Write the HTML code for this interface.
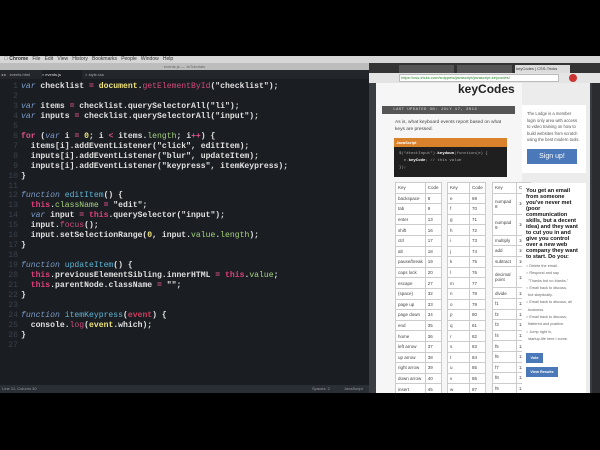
<!DOCTYPE html>
<html><head><style>
*{margin:0;padding:0;box-sizing:border-box}
body{width:600px;height:450px;background:#000;position:relative;overflow:hidden;font-family:"Liberation Sans",sans-serif}
.a{position:absolute}
#menu{left:0;top:56px;width:600px;height:7px;background:#d6d6d6;font-size:5px;color:#333;line-height:7px;white-space:nowrap}
#title{left:0;top:63px;width:369px;height:7px;background:#bdbdbd;font-size:4px;color:#666;text-align:center;line-height:7px}
#tabs{left:0;top:70px;width:369px;height:9px;background:#23272c;font-size:4px;color:#aaa;line-height:9px}
#ed{left:0;top:79px;width:369px;height:306px;background:#1a1e23}
#code{left:5px;top:82px;font-family:"Liberation Mono",monospace;font-size:8.1px;line-height:9.96px;color:#e0e0e0;white-space:pre;font-weight:bold}
.n{color:#3a4048;display:inline-block;width:13px;text-align:right;margin-right:3px;font-weight:normal}
.k{color:#7b9ac7;font-style:italic;font-weight:normal}
.p{color:#e0508a}
.y{color:#f0e27a}
.m{color:#d34a7a;font-weight:normal}
.g{color:#a6d27c;font-weight:normal}
.t{color:#e0407a}
.f{color:#5fb3d3;font-weight:normal}
.r{color:#d03a5a}
#status{left:0;top:385px;width:369px;height:8px;background:#2a2f35;font-size:4px;color:#999;line-height:8px}
#br{left:369px;top:63px;width:231px;height:330px;background:#3a3d41;overflow:hidden}
#btabs{left:0;top:0;width:231px;height:10px;background:#333}
#addr{left:0;top:10px;width:231px;height:10px;background:#e4e4e4}
#page{left:7px;top:20px;width:214px;height:310px;background:#ececec;overflow:hidden}
table{border-collapse:collapse;background:#fff;font-size:4.5px;color:#444}
td{border:1px solid #ccc;height:10.6px;padding:0 2px;white-space:nowrap}
</style></head><body>
<div id="menu" class="a">&nbsp;&nbsp;&nbsp;<b>&#63743; Chrome</b>&nbsp;&nbsp; File&nbsp;&nbsp; Edit&nbsp;&nbsp; View&nbsp;&nbsp; History&nbsp;&nbsp; Bookmarks&nbsp;&nbsp; People&nbsp;&nbsp; Window&nbsp;&nbsp; Help</div>
<div id="title" class="a">events.js — JsTutorials</div>
<div id="tabs" class="a">&nbsp;◂ ▸&nbsp;&nbsp; <span style="display:inline-block;width:30px">events.html</span>&nbsp;&nbsp;<span style="display:inline-block;width:40px;background:#1a1e23;color:#ddd">× events.js</span>&nbsp;&nbsp; × style.css</div>
<div id="ed" class="a"></div>
<div id="code" class="a"><span class="n">1</span><span class="k">var</span> checklist <span class="p">=</span> <span class="y">document</span>.<span class="m">getElementById</span>("checklist");
<span class="n">2</span>
<span class="n">3</span><span class="k">var</span> items <span class="p">=</span> checklist.querySelectorAll("li");
<span class="n">4</span><span class="k">var</span> inputs <span class="p">=</span> checklist.querySelectorAll("input");
<span class="n">5</span>
<span class="n">6</span><span class="p">for</span> (<span class="k">var</span> i <span class="p">=</span> <span class="y">0</span>; i <span class="p">&lt;</span> items.<span class="g">length</span>; i<span class="p">++</span>) {
<span class="n">7</span>  items[i].addEventListener("click", editItem);
<span class="n">8</span>  inputs[i].addEventListener("blur", updateItem);
<span class="n">9</span>  inputs[i].addEventListener("keypress", itemKeypress);
<span class="n">10</span>}
<span class="n">11</span>
<span class="n">12</span><span class="k">function</span> <span class="f">editItem</span>() {
<span class="n">13</span>  <span class="t">this</span>.<span class="g">className</span> <span class="p">=</span> "edit";
<span class="n">14</span>  <span class="k">var</span> input <span class="p">=</span> <span class="t">this</span>.querySelector("input");
<span class="n">15</span>  input.<span class="m">focus</span>();
<span class="n">16</span>  input.setSelectionRange(<span class="y">0</span>, input.<span class="g">value</span>.<span class="g">length</span>);
<span class="n">17</span>}
<span class="n">18</span>
<span class="n">19</span><span class="k">function</span> <span class="f">updateItem</span>() {
<span class="n">20</span>  <span class="t">this</span>.previousElementSibling.innerHTML <span class="p">=</span> <span class="t">this</span>.<span class="g">value</span>;
<span class="n">21</span>  <span class="t">this</span>.parentNode.className <span class="p">=</span> "";
<span class="n">22</span>}
<span class="n">23</span>
<span class="n">24</span><span class="k">function</span> <span class="f">itemKeypress</span>(<span class="r">event</span>) {
<span class="n">25</span>  console.<span class="m">log</span>(<span class="y">event</span>.which);
<span class="n">26</span>}
<span class="n">27</span></div>
<div id="status" class="a">&nbsp;&nbsp;Line 11, Column 30<span style="position:absolute;left:312px">Spaces: 2</span><span style="position:absolute;left:344px">JavaScript</span></div>
<div id="br" class="a">
 <div id="btabs" class="a"><div class="a" style="left:30px;top:2px;width:55px;height:8px;background:#555"></div><div class="a" style="left:88px;top:2px;width:55px;height:8px;background:#555"></div><div class="a" style="left:146px;top:2px;width:55px;height:8px;background:#ddd;font-size:4px;line-height:8px;color:#333">&nbsp;keyCodes | CSS-Tricks</div></div>
 <div id="addr" class="a"><div class="a" style="left:30px;top:1px;width:160px;height:8px;background:#fff;border:1px solid #bbb;font-size:4px;line-height:6px;color:#2a8a2a">&nbsp;https://css-tricks.com/snippets/javascript/javascript-keycodes/</div><div class="a" style="left:200px;top:1px;width:8px;height:8px;border-radius:4px;background:#c33"></div></div>
 <div id="page" class="a">
  <div class="a" style="left:0;top:0;width:146px;height:310px;background:#f6f6f6"></div>
  <div class="a" style="left:82px;top:0;font-size:12px;font-weight:bold;color:#222;line-height:13px">keyCodes</div>
  <div class="a" style="left:6px;top:23px;width:133px;height:8px;background:#555;color:#ddd;font-size:4px;line-height:8px;font-family:'Liberation Mono',monospace;letter-spacing:.4px">&nbsp;&nbsp;&nbsp;&nbsp;LAST UPDATED ON: JULY 17, 2014</div>
  <div class="a" style="left:19px;top:36px;width:115px;font-size:4.8px;line-height:7px;color:#444">As is, what keyboard events report based on what keys are pressed.</div>
  <div class="a" style="left:18px;top:55px;width:113px;height:9px;background:#d9822b;color:#fff;font-size:4px;line-height:9px;font-weight:bold">&nbsp;&nbsp;JavaScript</div>
  <div class="a" style="left:18px;top:64px;width:113px;height:30px;background:#1f1f1f;color:#aaa;font-size:4px;line-height:7px;font-family:'Liberation Mono',monospace;padding:4px 5px">$("#textInput").<b style="color:#fff">keydown</b>(function(e) {<br>&nbsp;&nbsp;e.<b style="color:#fff">keyCode</b>; // this value<br>});</div>
  <div class="a" style="left:19px;top:99px">
  <table><tr><td style="width:29px">Key</td><td style="width:14px">Code</td></tr>
  <tr><td>backspace</td><td>8</td></tr><tr><td>tab</td><td>9</td></tr><tr><td>enter</td><td>13</td></tr><tr><td>shift</td><td>16</td></tr><tr><td>ctrl</td><td>17</td></tr><tr><td>alt</td><td>18</td></tr><tr><td>pause/break</td><td>19</td></tr><tr><td>caps lock</td><td>20</td></tr><tr><td>escape</td><td>27</td></tr><tr><td>(space)</td><td>32</td></tr><tr><td>page up</td><td>33</td></tr><tr><td>page down</td><td>34</td></tr><tr><td>end</td><td>35</td></tr><tr><td>home</td><td>36</td></tr><tr><td>left arrow</td><td>37</td></tr><tr><td>up arrow</td><td>38</td></tr><tr><td>right arrow</td><td>39</td></tr><tr><td>down arrow</td><td>40</td></tr><tr><td>insert</td><td>45</td></tr></table></div>
  <div class="a" style="left:71px;top:99px">
  <table><tr><td style="width:22px">Key</td><td style="width:16px">Code</td></tr>
  <tr><td>e</td><td>69</td></tr><tr><td>f</td><td>70</td></tr><tr><td>g</td><td>71</td></tr><tr><td>h</td><td>72</td></tr><tr><td>i</td><td>73</td></tr><tr><td>j</td><td>74</td></tr><tr><td>k</td><td>75</td></tr><tr><td>l</td><td>76</td></tr><tr><td>m</td><td>77</td></tr><tr><td>n</td><td>78</td></tr><tr><td>o</td><td>79</td></tr><tr><td>p</td><td>80</td></tr><tr><td>q</td><td>81</td></tr><tr><td>r</td><td>82</td></tr><tr><td>s</td><td>83</td></tr><tr><td>t</td><td>84</td></tr><tr><td>u</td><td>85</td></tr><tr><td>v</td><td>86</td></tr><tr><td>w</td><td>87</td></tr></table></div>
  <div class="a" style="left:116px;top:99px">
  <table><tr><td style="width:24px">Key</td><td style="width:14px">Co</td></tr>
  <tr><td style="height:21px">numpad<br>8</td><td>104</td></tr><tr><td style="height:21px">numpad<br>9</td><td>105</td></tr><tr><td>multiply</td><td>106</td></tr><tr><td>add</td><td>107</td></tr><tr><td>subtract</td><td>109</td></tr><tr><td style="height:21px">decimal<br>point</td><td>110</td></tr><tr><td>divide</td><td>111</td></tr><tr><td>f1</td><td>112</td></tr><tr><td>f2</td><td>113</td></tr><tr><td>f3</td><td>114</td></tr><tr><td>f4</td><td>115</td></tr><tr><td>f5</td><td>116</td></tr><tr><td>f6</td><td>117</td></tr><tr><td>f7</td><td>118</td></tr><tr><td>f8</td><td>119</td></tr><tr><td>f9</td><td>120</td></tr><tr><td>f10</td><td>121</td></tr></table></div>
  <div class="a" style="left:146px;top:22px;width:64px;height:68px;background:#fff;padding:6px 5px;font-size:4.2px;line-height:6.5px;color:#555">The Lodge is a member login only area with access to video training on how to build websites from scratch using the best modern tools.
   <div style="margin-top:5px;width:50px;height:15px;background:#4a78b8;color:#fff;font-size:7px;line-height:15px;text-align:center">Sign up!</div></div>
  <div class="a" style="left:146px;top:100px;width:64px;height:210px;background:#fff;padding:5px 4px;font-size:5.6px;line-height:6px;color:#111;font-weight:bold">You get an email from someone you've never met (poor communication skills, but a decent idea) and they want to cut you in and give you control over a new web company they want to start. Do you:
   <div style="font-weight:normal;font-size:3.8px;line-height:7.3px;color:#666;margin-top:3px">○ Delete the email.<br>○ Respond and say<br>&nbsp;&nbsp;"Thanks but no thanks."<br>○ Email back to discuss,<br>&nbsp;&nbsp;but skeptically.<br>○ Email back to discuss, all<br>&nbsp;&nbsp;business.<br>○ Email back to discuss,<br>&nbsp;&nbsp;flattered and positive.<br>○ Jump right in,<br>&nbsp;&nbsp;startup-life here I come.</div>
   <div style="margin-top:10px;width:17px;height:10px;background:#4a78b8;color:#fff;font-size:3.8px;line-height:10px;text-align:center">Vote</div>
   <div style="margin-top:4px;width:32px;height:10px;background:#4a78b8;color:#fff;font-size:3.8px;line-height:10px;text-align:center">View Results</div></div>
 </div>
 <div class="a" style="left:223px;top:20px;width:8px;height:310px;background:#2a2c2f"></div>
</div>
</body></html>
